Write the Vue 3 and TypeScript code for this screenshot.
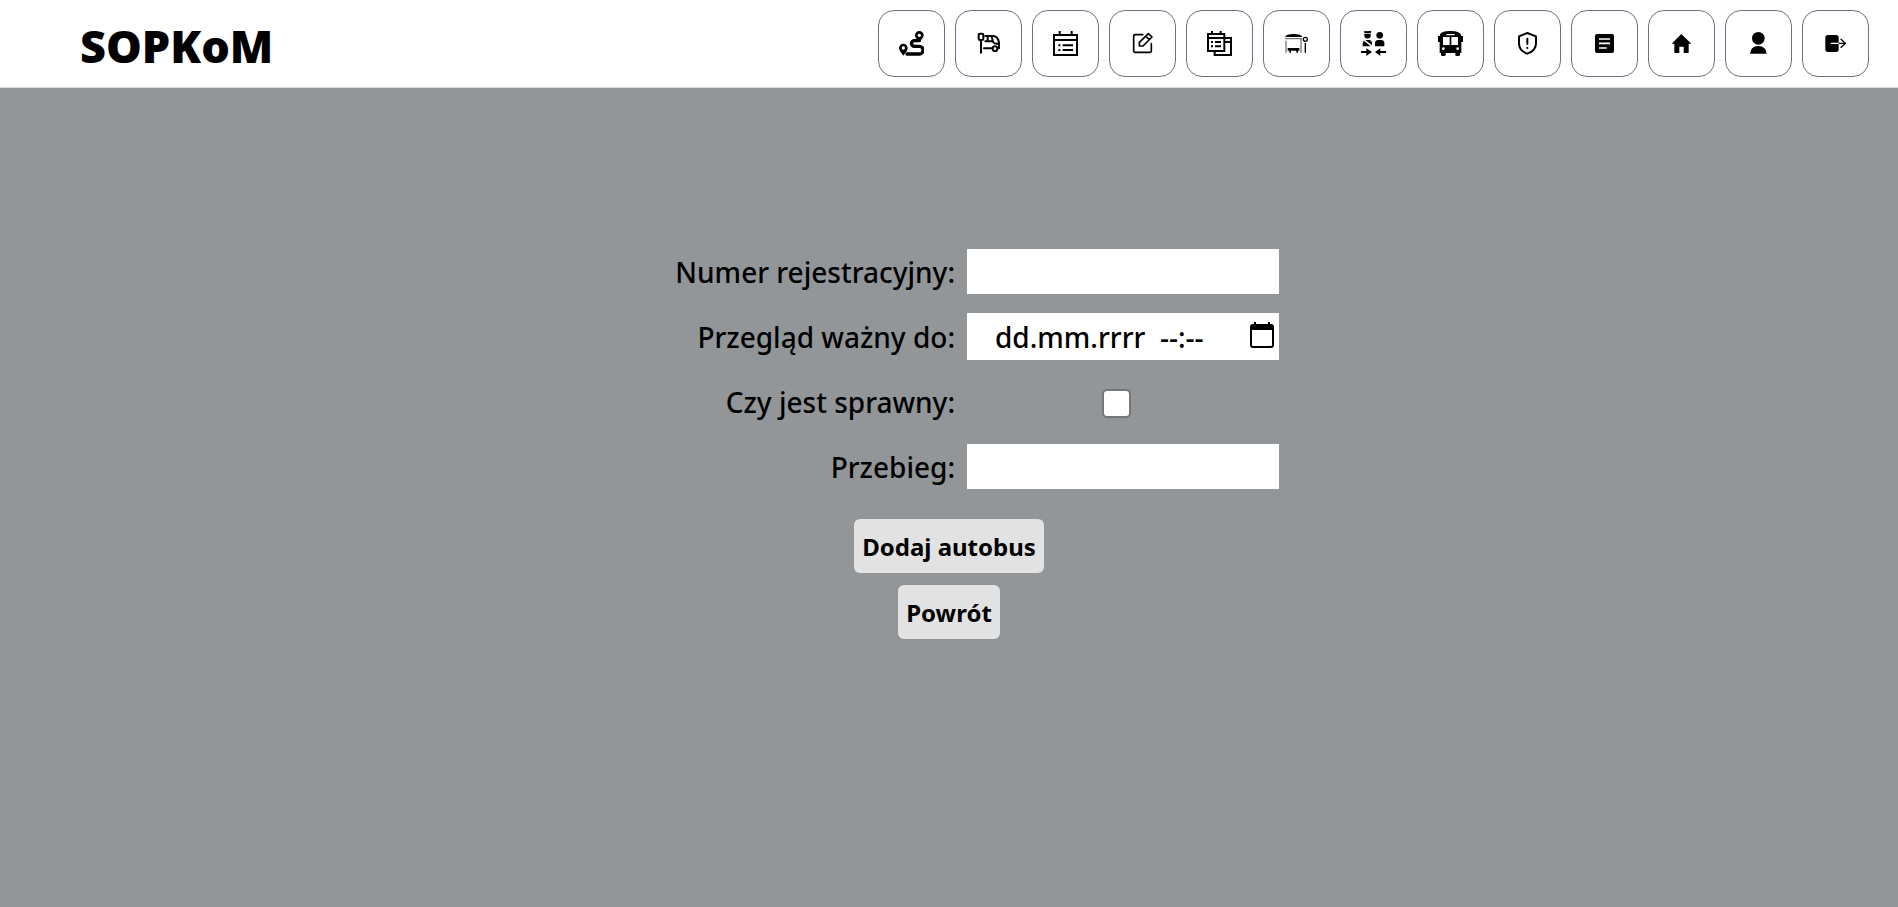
<script setup lang="ts">
import { ref } from 'vue'

interface NavItem {
  label: string
  icon: string
}

const navItems: NavItem[] = [
  { label: 'Trasy', icon: 'route' },
  { label: 'Przystanki', icon: 'stop' },
  { label: 'Kalendarz', icon: 'calendar' },
  { label: 'Edycja', icon: 'edit' },
  { label: 'Harmonogramy', icon: 'calendars' },
  { label: 'Wiaty', icon: 'shelter' },
  { label: 'Kierowcy', icon: 'drivers' },
  { label: 'Autobusy', icon: 'bus' },
  { label: 'Awarie', icon: 'shield' },
  { label: 'Raporty', icon: 'article' },
  { label: 'Strona główna', icon: 'home' },
  { label: 'Profil', icon: 'user' },
  { label: 'Wyloguj', icon: 'logout' },
]

const registration = ref('')
const inspection = ref('')
const working = ref(false)
const mileage = ref('')
</script>

<template>
  <div class="page">
    <header class="topbar">
      <a class="brand" href="#">SOPKoM</a>
      <nav class="nav">
        <button v-for="item in navItems" :key="item.icon" type="button" class="nav-button" :aria-label="item.label">
          <svg class="icon" viewBox="0 0 75 75" aria-hidden="true">
            <g v-if="item.icon === 'route'">
              <path class="line" stroke-width="10" d="M61 29H46a8 8 0 0 0 0 17H61a11 11 0 0 1 0 23H24" />
              <path d="M61 0a13 13 0 0 1 13 13c0 9-8 13-13 20c-5-7-13-11-13-20a13 13 0 0 1 13-13z" />
              <path d="M13 38a13 13 0 0 1 13 13c0 9-8 15-13 23c-5-8-13-14-13-23a13 13 0 0 1 13-13z" />
              <circle class="light" cx="61" cy="13" r="5" />
              <circle class="light" cx="13" cy="51" r="5" />
            </g>
            <g v-else-if="item.icon === 'stop'" class="line" stroke-width="6">
              <rect x="8" y="8" width="14" height="19" rx="4" />
              <path d="M15 28V65M28 15H52Q67 17 69 36V52H65M28 31H50M35 15V31M47 15L51 33Q56 40 68 38M24 52H49" />
              <circle cx="57" cy="53" r="7" />
            </g>
            <g v-else-if="item.icon === 'calendar'">
              <path class="line sharp" stroke-width="6" d="M3 12H72V72H3ZM3 27H72" />
              <path class="line sharp" stroke-width="6" d="M20 0V12M56 0V12M16 43H22M29 43H60M16 57H22M29 57H60" />
            </g>
            <g v-else-if="item.icon === 'edit'" class="line" stroke-width="5">
              <path d="M38 11H15Q11 11 11 15V60Q11 64 15 64H60Q64 64 64 60V38" />
              <path d="M28 45V34L55 8L66 18L39 45ZM47 15L58 26" />
            </g>
            <g v-else-if="item.icon === 'calendars'">
              <path class="line sharp" stroke-width="6" d="M3 9H52V60H3ZM3 21H52M55 21H72V72H23V60M55 33H72" />
              <path class="line sharp" stroke-width="6" d="M15 0V9M41 0V9M12 33H18M24 33H42M12 46H18M24 46H42" />
            </g>
            <g v-else-if="item.icon === 'shelter'">
              <path d="M3 18Q6 9 29 9Q52 9 55 18Z" />
              <path class="line soft sharp" stroke-width="4" d="M3 23H54M6 29V65M51 24V65" />
              <path d="M11 51H46V59H42V65H37V59H21V65H16V59H11Z" />
              <circle class="line" stroke-width="4" cx="64" cy="25" r="6" />
              <path class="line sharp" stroke-width="4" d="M64 36V65" />
            </g>
            <g v-else-if="item.icon === 'drivers'">
              <path d="M8 1L31 0L29 7H11ZM10 9H29V13a9 9 0 0 1-19 0Z" />
              <path d="M13 27L33 43V35Q32 27 25 27ZM5 37Q6 31 9 29L29 46H5Z" />
              <circle cx="56" cy="13" r="10" />
              <path d="M42 46V37Q42 27 52 27H60Q70 27 70 37V46Z" />
              <path d="M0 60H16V52L33 63L16 75V66H0ZM75 60H58V52L42 63L58 75V66H75Z" />
            </g>
            <g v-else-if="item.icon === 'bus'">
              <path d="M5 15Q5 0 37 0T70 15H75V33H70V66H66V72Q66 75 62 75H56Q52 75 52 71V66H23V71Q23 75 19 75H13Q9 75 9 71V66H5V33H0V15Z" />
              <path class="light" d="M15 18H35V42H15ZM40 18H60V42H40ZM25 9H50V13H25Z" />
              <circle class="light" cx="16" cy="53" r="4" />
              <circle class="light" cx="59" cy="53" r="4" />
            </g>
            <g v-else-if="item.icon === 'shield'" class="line" stroke-width="6">
              <path d="M37 6L63 16V37C63 53 53 63 37 68C21 63 12 53 12 37V16Z" />
              <path d="M37 23V39M37 50V51" />
            </g>
            <g v-else-if="item.icon === 'article'">
              <rect x="9" y="9" width="57" height="57" rx="6" />
              <path class="line paper sharp" stroke-width="5" d="M21 24H54M21 37H54M21 51H44" />
            </g>
            <path v-else-if="item.icon === 'home'" d="M37 9L67 38H59V66H44V47H31V66H16V38H8Z" />
            <g v-else-if="item.icon === 'user'">
              <circle cx="37" cy="22" r="19" />
              <path d="M12 68Q14 45 37 45Q60 45 62 68Z" />
            </g>
            <g v-else>
              <rect x="7" y="12" width="40" height="51" rx="8" />
              <path class="line paper" stroke-width="4" d="M25 37H47" />
              <path class="line sharp" stroke-width="4" d="M47 37H67M53 24L67 37L53 50" />
            </g>
          </svg>
        </button>
      </nav>
    </header>

    <main class="content">
      <form @submit.prevent>
        <div class="fields">
          <label for="registration">Numer rejestracyjny:</label>
          <input id="registration" v-model="registration" class="text-field" type="text" />

          <label for="inspection">Przegląd ważny do:</label>
          <div class="date-field">
            <input id="inspection" v-model="inspection" type="text" placeholder="dd.mm.rrrr  --:--" />
            <button type="button" class="picker" aria-label="Wybierz datę">
              <svg viewBox="0 0 24 26" aria-hidden="true">
                <path fill-rule="evenodd" d="M4 0H6V2H18V0H20V2H21Q24 2 24 5V23Q24 26 21 26H3Q0 26 0 23V5Q0 2 3 2H4ZM2 8V23Q2 24 3 24H21Q22 24 22 23V8Z" />
              </svg>
            </button>
          </div>

          <label for="working">Czy jest sprawny:</label>
          <div class="check-field">
            <input id="working" v-model="working" type="checkbox" />
          </div>

          <label for="mileage">Przebieg:</label>
          <input id="mileage" v-model="mileage" class="text-field" type="text" />
        </div>

        <div class="actions">
          <button type="submit" class="action">Dodaj autobus</button>
          <button type="button" class="action">Powrót</button>
        </div>
      </form>
    </main>
  </div>
</template>

<style>
body {
  margin: 0;
}
</style>

<style scoped>
.page {
  min-height: 100vh;
  background: #929698;
  color: #000;
  font-family: 'Noto Sans', 'Open Sans', sans-serif;
  font-size: 28px;
  font-weight: 500;
}

.topbar {
  display: flex;
  align-items: center;
  justify-content: space-between;
  padding: 10px 29px 10px 80px;
  background: #fff;
  border-bottom: 1px solid #d8dadb;
}

.brand {
  color: #000;
  font-size: 45px;
  font-weight: 900;
  line-height: 62px;
  padding-top: 4px;
  text-decoration: none;
}

.nav {
  display: flex;
  gap: 10px;
}

.nav-button {
  display: grid;
  place-items: center;
  width: 67px;
  height: 67px;
  padding: 0;
  background: #fff;
  border: 1px solid #6b7280;
  border-radius: 16px;
}

.icon {
  width: 25px;
  height: 25px;
}

.line {
  fill: none;
  stroke: #000;
  stroke-linecap: round;
  stroke-linejoin: round;
}

.sharp {
  stroke-linecap: butt;
  stroke-linejoin: miter;
}

.soft {
  stroke: #777;
}

.light {
  fill: #fff;
}

.paper {
  stroke: #fff;
}

.content {
  padding-top: 160px;
}

.fields {
  display: grid;
  grid-template-columns: 1fr 1fr;
  grid-auto-rows: 47px;
  align-items: center;
  gap: 18px 12px;
  padding-left: 24px;
}

label {
  justify-self: end;
  line-height: 48px;
}

.text-field,
.date-field,
.check-field {
  box-sizing: border-box;
  width: 312px;
}

.text-field {
  height: 45px;
  padding: 0 28px;
  border: 0;
  background: #fff;
  font: inherit;
}

.date-field {
  display: flex;
  align-items: center;
  justify-content: space-between;
  height: 47px;
  padding: 0 5px 0 28px;
  background: #fff;
}

.date-field input {
  width: 240px;
  height: 47px;
  padding: 0;
  border: 0;
  background: transparent;
  font: inherit;
}

.date-field input::placeholder {
  color: #000;
  opacity: 1;
}

.picker {
  width: 24px;
  height: 26px;
  margin-bottom: 4px;
  padding: 0;
  border: 0;
  background: none;
}

.picker svg {
  display: block;
}

.check-field {
  display: flex;
  justify-content: center;
  padding: 4px 14px 0 0;
}

.check-field input {
  appearance: none;
  width: 29px;
  height: 29px;
  margin: 0;
  border: 2px solid #767676;
  border-radius: 5px;
  background: #fff;
}

.check-field input:checked {
  border-color: #0075ff;
  background: #0075ff;
}

.actions {
  display: flex;
  flex-direction: column;
  align-items: center;
  gap: 12px;
  padding-top: 29px;
}

.action {
  height: 54px;
  padding: 0 8px;
  border: 0;
  border-radius: 6px;
  background: #e2e2e2;
  color: #000;
  font-family: inherit;
  font-size: 24px;
  font-weight: 700;
}
</style>
